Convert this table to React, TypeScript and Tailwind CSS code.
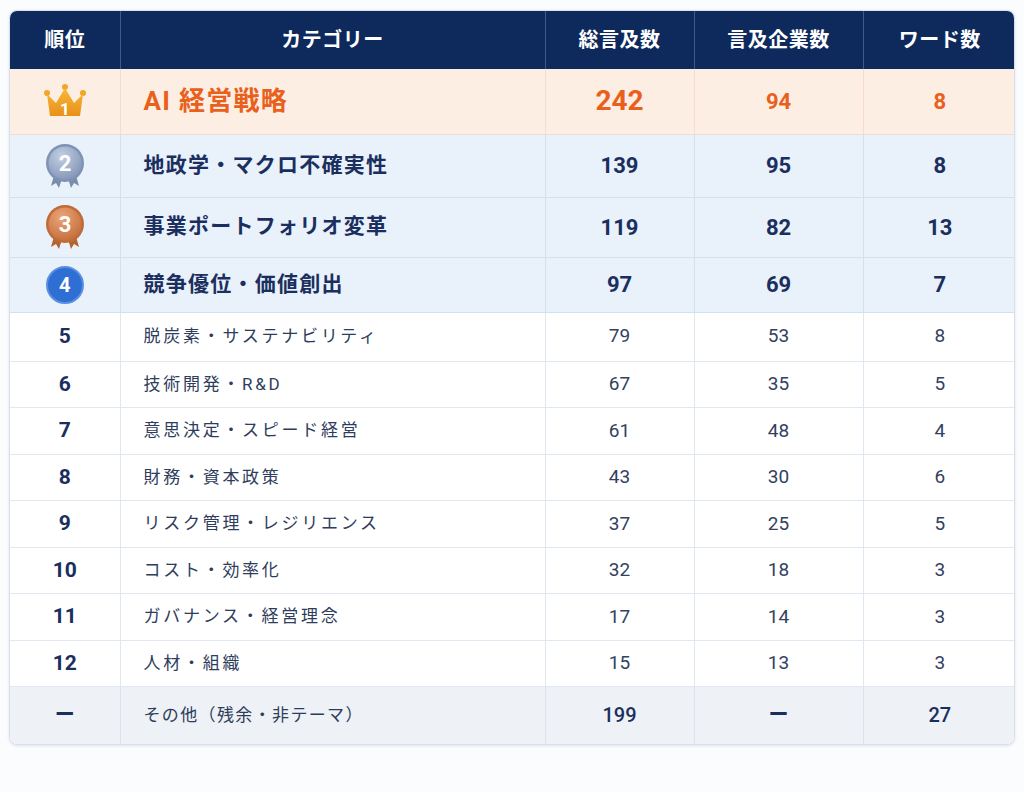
const FONT = { fontFamily: 'Roboto, "Noto Sans CJK JP", sans-serif' };

type Row = { rank: number | null; name: string; total: string; companies: string; words: string };

const ROWS: Row[] = [
  { rank: 1, name: "AI 経営戦略", total: "242", companies: "94", words: "8" },
  { rank: 2, name: "地政学・マクロ不確実性", total: "139", companies: "95", words: "8" },
  { rank: 3, name: "事業ポートフォリオ変革", total: "119", companies: "82", words: "13" },
  { rank: 4, name: "競争優位・価値創出", total: "97", companies: "69", words: "7" },
  { rank: 5, name: "脱炭素・サステナビリティ", total: "79", companies: "53", words: "8" },
  { rank: 6, name: "技術開発・R&D", total: "67", companies: "35", words: "5" },
  { rank: 7, name: "意思決定・スピード経営", total: "61", companies: "48", words: "4" },
  { rank: 8, name: "財務・資本政策", total: "43", companies: "30", words: "6" },
  { rank: 9, name: "リスク管理・レジリエンス", total: "37", companies: "25", words: "5" },
  { rank: 10, name: "コスト・効率化", total: "32", companies: "18", words: "3" },
  { rank: 11, name: "ガバナンス・経営理念", total: "17", companies: "14", words: "3" },
  { rank: 12, name: "人材・組織", total: "15", companies: "13", words: "3" },
];

function Crown() {
  return (
    <svg width="44" height="34" viewBox="0 0 44 34">
      <defs>
        <linearGradient id="cg" x1="0" y1="0" x2="0" y2="1">
          <stop offset="0" stopColor="#f8b93a" />
          <stop offset="1" stopColor="#e8901a" />
        </linearGradient>
      </defs>
      <circle cx="4" cy="9" r="3" fill="#f2a526" />
      <circle cx="22" cy="3" r="3" fill="#f2a526" />
      <circle cx="40" cy="9" r="3" fill="#f2a526" />
      <path d="M4 10 L13 19 L22 4 L31 19 L40 10 L37 32 L7 32 Z" fill="url(#cg)" />
      <text x="22" y="30.5" textAnchor="middle" fontSize="17" fontWeight="700" fill="#fff" fontFamily="Roboto, sans-serif">1</text>
    </svg>
  );
}

function Medal({ n, light, dark, ribbon }: { n: number; light: string; dark: string; ribbon: string }) {
  const id = `m${n}`;
  return (
    <svg width="44" height="48" viewBox="0 0 44 48">
      <defs>
        <radialGradient id={id} cx="0.4" cy="0.3" r="0.8">
          <stop offset="0" stopColor={light} />
          <stop offset="1" stopColor={dark} />
        </radialGradient>
      </defs>
      <path d="M12 30 L8 44 L13 41 L16 46 L20 33 Z" fill={ribbon} />
      <path d="M32 30 L36 44 L31 41 L28 46 L24 33 Z" fill={ribbon} />
      <circle cx="22" cy="21" r="19" fill={dark} />
      <circle cx="22" cy="21" r="16.5" fill={`url(#${id})`} />
      <text x="22" y="29" textAnchor="middle" fontSize="22" fontWeight="700" fill="#fff" fontFamily="Roboto, sans-serif">{n}</text>
    </svg>
  );
}

function RankCell({ rank }: { rank: number | null }) {
  if (rank === 1) return <Crown />;
  if (rank === 2) return <Medal n={2} light="#c3cfe3" dark="#7f92b4" ribbon="#7a8cab" />;
  if (rank === 3) return <Medal n={3} light="#eda577" dark="#c06a38" ribbon="#b3642f" />;
  if (rank === 4)
    return (
      <div className="w-[38px] h-[38px] rounded-full bg-[#2f6fd4] border-2 border-[#5b8fe3] flex items-center justify-center text-white text-[20px] font-bold">
        4
      </div>
    );
  return <span className="text-[21px] font-bold text-[#1b2f5e]">{rank}</span>;
}

export default function App() {
  const rowStyle = (r: Row, i: number) => {
    if (r.rank === 1) return { bg: "bg-[#fdeee3]", h: "h-[65px]", line: "border-[#f3dccd]" };
    if (r.rank === 2) return { bg: "bg-[#e9f1fb]", h: "h-[63px]", line: "border-[#d3e0f0]" };
    if (r.rank === 3) return { bg: "bg-[#e9f1fb]", h: "h-[60px]", line: "border-[#d3e0f0]" };
    if (r.rank === 4) return { bg: "bg-[#e9f1fb]", h: "h-[55px]", line: "border-[#d3e0f0]" };
    if (i === 4) return { bg: "bg-white", h: "h-[49px]", line: "border-[#e1e7f0]" };
    return { bg: "bg-white", h: "h-[46.5px]", line: "border-[#e1e7f0]" };
  };

  return (
    <div className="min-h-[792px] bg-[#fbfcfe] pt-[10px] px-[9px]" style={FONT}>
      <div className="w-[1006px] rounded-lg overflow-hidden border border-[#d8e0ea] shadow-[0_1px_3px_rgba(15,40,90,0.12)] bg-white">
        <table className="w-full border-collapse table-fixed">
          <colgroup>
            <col className="w-[110px]" />
            <col className="w-[425px]" />
            <col className="w-[149px]" />
            <col className="w-[169px]" />
            <col className="w-[153px]" />
          </colgroup>
          <thead>
            <tr className="h-[58px] bg-[#0e2a5c] text-white text-[20px] font-bold">
              <th className="border-r border-[#3d5a8a] tracking-wide">順位</th>
              <th className="border-r border-[#3d5a8a] tracking-wide">カテゴリー</th>
              <th className="border-r border-[#3d5a8a] tracking-wide">総言及数</th>
              <th className="border-r border-[#3d5a8a] tracking-wide">言及企業数</th>
              <th className="tracking-wide">ワード数</th>
            </tr>
          </thead>
          <tbody>
            {ROWS.map((r, i) => {
              const s = rowStyle(r, i);
              const top = r.rank === 1;
              const featured = r.rank !== null && r.rank <= 4;
              const cell = `border-b border-r ${s.line} text-center`;
              return (
                <tr key={r.name} className={`${s.bg} ${s.h}`}>
                  <td className={cell}>
                    <div className="flex items-center justify-center">
                      <RankCell rank={r.rank} />
                    </div>
                  </td>
                  <td className={`border-b border-r ${s.line} text-left pl-[23px]`}>
                    {top ? (
                      <span className="text-[26px] font-bold text-[#e8601c] tracking-[0.05em]">{r.name}</span>
                    ) : featured ? (
                      <span className="text-[21px] font-bold text-[#1b2f5e] tracking-[0.06em]">{r.name}</span>
                    ) : (
                      <span className="text-[17px] text-[#2f3d5c] tracking-[0.16em]">{r.name}</span>
                    )}
                  </td>
                  <td className={cell}>
                    {top ? (
                      <span className="text-[28px] font-bold text-[#e8601c]">{r.total}</span>
                    ) : featured ? (
                      <span className="text-[22px] font-bold text-[#1b2f5e]">{r.total}</span>
                    ) : (
                      <span className="text-[19px] text-[#33415f]">{r.total}</span>
                    )}
                  </td>
                  <td className={cell}>
                    {top ? (
                      <span className="text-[22px] font-bold text-[#e8601c]">{r.companies}</span>
                    ) : featured ? (
                      <span className="text-[22px] font-bold text-[#1b2f5e]">{r.companies}</span>
                    ) : (
                      <span className="text-[19px] text-[#33415f]">{r.companies}</span>
                    )}
                  </td>
                  <td className={`border-b ${s.line} text-center`}>
                    {top ? (
                      <span className="text-[22px] font-bold text-[#e8601c]">{r.words}</span>
                    ) : featured ? (
                      <span className="text-[22px] font-bold text-[#1b2f5e]">{r.words}</span>
                    ) : (
                      <span className="text-[19px] text-[#33415f]">{r.words}</span>
                    )}
                  </td>
                </tr>
              );
            })}
            <tr className="h-[57px] bg-[#eef1f5]">
              <td className="border-r border-[#dde3ec] text-center">
                <span className="text-[20px] font-bold text-[#1b2f5e]">ー</span>
              </td>
              <td className="border-r border-[#dde3ec] text-left pl-[23px]">
                <span className="text-[17px] text-[#2f3d5c] tracking-[0.08em]">その他（残余・非テーマ）</span>
              </td>
              <td className="border-r border-[#dde3ec] text-center">
                <span className="text-[20px] text-[#1b2f5e] font-medium">199</span>
              </td>
              <td className="border-r border-[#dde3ec] text-center">
                <span className="text-[20px] font-bold text-[#1b2f5e]">ー</span>
              </td>
              <td className="text-center">
                <span className="text-[20px] text-[#1b2f5e] font-medium">27</span>
              </td>
            </tr>
          </tbody>
        </table>
      </div>
    </div>
  );
}
